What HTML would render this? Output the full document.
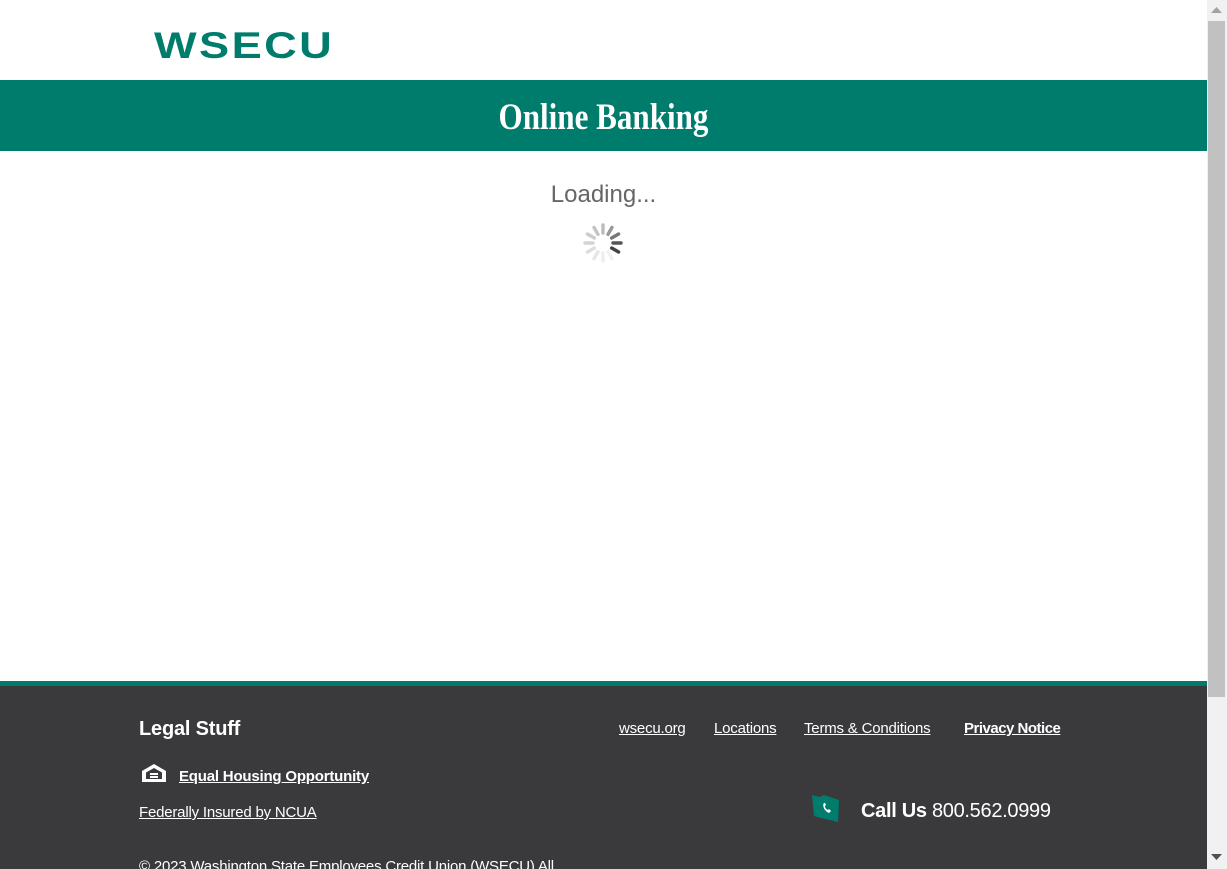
<!DOCTYPE html>
<html><head><meta charset="utf-8"><style>
*{margin:0;padding:0;box-sizing:border-box}
html,body{width:1227px;height:869px;overflow:hidden;background:#fff;font-family:"Liberation Sans",sans-serif}
.page{position:absolute;left:0;top:0;width:1207px;height:869px;overflow:hidden}
.logo{position:absolute;left:154px;top:29px;font:900 37px/33px "Liberation Sans",sans-serif;color:#007c6c;letter-spacing:2px;transform:scaleX(1.22);transform-origin:left;height:33px}
.band{position:absolute;left:0;top:80px;width:1207px;height:71px;background:#007c6c}
.band h1{position:absolute;left:0;right:0;top:18px;text-align:center;font:bold 37px/40px "Liberation Serif",serif;color:#fff;transform:scaleX(0.84)}
.loading{position:absolute;left:0;width:1207px;top:181px;text-align:center;font-size:24px;color:#666}
.spin{position:absolute;left:582px;top:222px}
.tealline{position:absolute;left:0;top:681px;width:1207px;height:5px;background:#007c6c}
.foot{position:absolute;left:0;top:686px;width:1207px;height:183px;background:#3a3a3c;color:#fff}
.foot a{color:#fff;text-decoration:underline}
.a{position:absolute;font-size:15px;letter-spacing:-0.2px}
.sb{position:absolute;left:1207px;top:0;width:20px;height:869px;background:#f1f1f1}
.th{position:absolute;left:1208px;top:21px;width:17px;height:676px;background:#c1c1c1}
</style></head><body>
<div class="page">
<div class="logo">WSECU</div>
<div class="band"><h1>Online Banking</h1></div>
<div class="loading">Loading...</div>
<svg class="spin" width="42" height="42" viewBox="-21 -21 42 42">
<g stroke-width="3.4" stroke-linecap="round">
<line x1="0" y1="-10" x2="0" y2="-18" stroke="#bbb" transform="rotate(0)"/>
<line x1="0" y1="-10" x2="0" y2="-18" stroke="#999" transform="rotate(30)"/>
<line x1="0" y1="-10" x2="0" y2="-18" stroke="#777" transform="rotate(60)"/>
<line x1="0" y1="-10" x2="0" y2="-18" stroke="#555" transform="rotate(90)"/>
<line x1="0" y1="-10" x2="0" y2="-18" stroke="#444" transform="rotate(120)"/>
<line x1="0" y1="-10" x2="0" y2="-18" stroke="#f0f0f0" transform="rotate(150)"/>
<line x1="0" y1="-10" x2="0" y2="-18" stroke="#eee" transform="rotate(180)"/>
<line x1="0" y1="-10" x2="0" y2="-18" stroke="#e6e6e6" transform="rotate(210)"/>
<line x1="0" y1="-10" x2="0" y2="-18" stroke="#ddd" transform="rotate(240)"/>
<line x1="0" y1="-10" x2="0" y2="-18" stroke="#d4d4d4" transform="rotate(270)"/>
<line x1="0" y1="-10" x2="0" y2="-18" stroke="#ccc" transform="rotate(300)"/>
<line x1="0" y1="-10" x2="0" y2="-18" stroke="#c4c4c4" transform="rotate(330)"/>
</g></svg>
<div class="tealline"></div>
<div class="foot">
<div class="a" style="left:139px;top:32px;font-size:20px;font-weight:bold">Legal Stuff</div>
<svg style="position:absolute;left:141px;top:77px" width="26" height="20" viewBox="0 0 26 20"><path d="M13 1 L1 8 V19 H25 V8 Z" fill="#fff"/><path d="M13 5 L5 9.5 V16 H21 V9.5 Z" fill="#3a3a3c"/><rect x="9" y="10" width="8" height="2" fill="#fff"/><rect x="9" y="13" width="8" height="2" fill="#fff"/></svg>
<a class="a" style="left:179px;top:82px;font-weight:bold">Equal Housing Opportunity</a>
<a class="a" style="left:139px;top:118px">Federally Insured by NCUA</a>
<div class="a" style="left:139px;top:172px">© 2023 Washington State Employees Credit Union (WSECU) All</div>
<a class="a" style="left:619px;top:34px">wsecu.org</a>
<a class="a" style="left:714px;top:34px">Locations</a>
<a class="a" style="left:804px;top:34px">Terms &amp; Conditions</a>
<a class="a" style="left:964px;top:34px;font-weight:bold;letter-spacing:-0.5px">Privacy Notice</a>
<svg style="position:absolute;left:811px;top:108px" width="30" height="30" viewBox="0 0 30 30"><path d="M1 1 L9 3 L13 1 L28 6 L27 28 L10 24 L3 22 Z" fill="#007c6c"/><path d="M13 9 C11 11 13 17 18 19 L20 17 L18 15 L17 16 C15 15 14 14 14 12 L15 11 L14 9 Z" fill="#fff"/></svg>
<div class="a" style="left:861px;top:114px;font-size:20px;letter-spacing:-0.3px"><b>Call Us</b> 800.562.0999</div>
</div>
</div>
<div class="sb"></div>
<div class="th"></div>
<svg style="position:absolute;left:1211px;top:7px" width="11" height="7"><path d="M0 6 L5.5 0 L11 6Z" fill="#a3a3a3"/></svg>
<svg style="position:absolute;left:1211px;top:854px" width="11" height="7"><path d="M0 0 L5.5 6 L11 0Z" fill="#505050"/></svg>
</body></html>
